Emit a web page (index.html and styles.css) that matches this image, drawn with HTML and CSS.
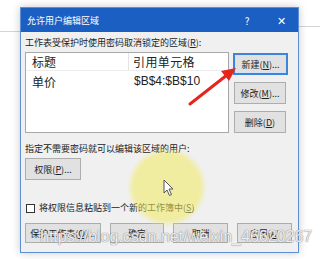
FILE: index.html
```html
<!DOCTYPE html>
<html lang="zh-CN">
<head>
    <meta charset="UTF-8">
    <title>允许用户编辑区域</title>
    <link rel="stylesheet" href="styles.css">
</head>
<body>
    <div class="dialog">
        <div class="titlebar">
            <span class="title">允许用户编辑区域</span>
            <span class="title-btn help">?</span>
            <span class="title-btn close">✕</span>
        </div>

        <div class="content">
            <p class="label">工作表受保护时使用密码取消锁定的区域(<u>R</u>):</p>

            <div class="main-row">
                <div class="list">
                    <div class="list-head">
                        <span class="col-title">标题</span>
                        <span class="col-ref">引用单元格</span>
                    </div>
                    <div class="list-row">
                        <span class="col-title">单价</span>
                        <span class="col-ref">$B$4:$B$10</span>
                    </div>
                </div>

                <div class="side-btns">
                    <button class="btn focused">新建(<u>N</u>)...</button>
                    <button class="btn">修改(<u>M</u>)...</button>
                    <button class="btn">删除(<u>D</u>)</button>
                </div>
            </div>

            <p class="label second">指定不需要密码就可以编辑该区域的用户:</p>
            <button class="btn perm">权限(<u>P</u>)...</button>

            <label class="check-row">
                <span class="checkbox"></span>
                <span>将权限信息粘贴到一个新的工作簿中(<u>S</u>)</span>
            </label>

            <div class="bottom-btns">
                <button class="btn wide">保护工作表(<u>O</u>)...</button>
                <button class="btn">确定</button>
                <button class="btn">取消</button>
                <button class="btn">应用(<u>A</u>)</button>
            </div>
        </div>
    </div>

    <!-- screen recording overlays -->
    <div class="highlight"></div>

    <svg class="arrow" width="320" height="259" viewBox="0 0 320 259">
        <line x1="190" y1="104" x2="227" y2="75" stroke="#e5261d" stroke-width="3" stroke-linecap="round"/>
        <polygon points="236,68 229,81 221,71" fill="#e5261d"/>
    </svg>

    <svg class="cursor" width="12" height="18" viewBox="0 0 12 18">
        <path d="M1 1 L1 14 L4 11 L6.5 16.5 L8.5 15.5 L6 10 L10 10 Z" fill="#fff" stroke="#555" stroke-width="1"/>
    </svg>

    <div class="watermark">https://blog.csdn.net/weixin_46620267</div>
</body>
</html>
```

FILE: styles.css
```css
body {
    margin: 0;
    width: 320px;
    height: 259px;
    overflow: hidden;
    position: relative;
    background:
        linear-gradient(#d4d4d4, #d4d4d4) 0 31px / 20px 1px no-repeat,
        linear-gradient(#d4d4d4, #d4d4d4) 299px 26px / 21px 1px no-repeat,
        #fff;
    font-family: "Noto Sans CJK SC", "Noto Sans", sans-serif;
    color: #222;
}

.dialog {
    margin: 7px 0 0 20px;
    width: 277px;
    background: #f0f0f0;
    border: 1px solid #5d8fd2;
    box-shadow: 0 0 8px rgba(0, 0, 0, 0.22);
}

.titlebar {
    height: 24px;
    background: #1c5fc2;
    color: #fff;
    display: flex;
    align-items: center;
    font-size: 9px;
    padding-left: 6px;
}

.title {
    flex: 1;
}

.title-btn {
    width: 34px;
    text-align: center;
    font-size: 10px;
}

.close {
    font-size: 11px;
}

.content {
    padding: 5px 6px 9px 4px;
}

.label {
    margin: 0 0 3px;
    font-size: 9px;
    line-height: 12px;
    white-space: nowrap;
}

.label.second {
    margin-top: 10px;
}

.main-row {
    display: flex;
    justify-content: space-between;
}

.list {
    width: 202px;
    height: 79px;
    background: #fff;
    border: 1px solid #a8a8a8;
    font-size: 12px;
}

.list-head, .list-row {
    display: flex;
    align-items: center;
}

.list-head {
    height: 17px;
    border-bottom: 1px solid #ececec;
}

.list-row {
    height: 20px;
}

.col-title {
    width: 96px;
    padding-left: 6px;
    border-right: 1px solid transparent;
}

.list-head .col-title {
    border-right-color: #e3e3e3;
}

.col-ref {
    padding-left: 4px;
    letter-spacing: 0.4px;
}

.list-row .col-ref {
    font-family: "Liberation Sans", Arial, sans-serif;
    letter-spacing: 0;
    padding-left: 5px;
}

.side-btns {
    display: flex;
    flex-direction: column;
    gap: 7px;
    padding-top: 1px;
    margin-right: 4px;
}

.btn {
    font-family: "Noto Sans CJK SC", "Noto Sans", sans-serif;
    font-size: 9px;
    color: #222;
    background: #e1e1e1;
    border: 1px solid #adadad;
    height: 22px;
    width: 52px;
    padding: 0;
    white-space: nowrap;
}

.btn.focused {
    border: 2px solid #3d85d8;
    box-shadow: inset 0 0 0 1px #cfe2f7;
    width: 55px;
    margin-left: -1px;
}

.perm {
    display: block;
    width: 56px;
}

.check-row {
    display: flex;
    align-items: center;
    gap: 4px;
    margin-top: 22px;
    font-size: 9px;
    line-height: 12px;
    padding-left: 1px;
}

.checkbox {
    width: 7px;
    height: 7px;
    border: 1px solid #333;
    background: #fff;
}

.bottom-btns {
    display: flex;
    gap: 9px;
    margin-top: 9px;
}

.bottom-btns .btn {
    height: 20px;
    width: 55px;
}

.bottom-btns .btn.wide {
    width: 76px;
}

.highlight {
    position: absolute;
    left: 127px;
    top: 147px;
    width: 80px;
    height: 80px;
    border-radius: 50%;
    background: radial-gradient(circle, rgba(240, 234, 95, 0.55) 58%, rgba(240, 234, 95, 0) 71%);
}

.arrow {
    position: absolute;
    left: 0;
    top: 0;
}

.cursor {
    position: absolute;
    left: 163px;
    top: 179px;
}

.watermark {
    position: absolute;
    left: 40px;
    top: 228px;
    font-family: "Liberation Sans", Arial, sans-serif;
    font-size: 16px;
    color: rgba(255, 255, 255, 0.85);
    text-shadow: 0 0 1px #8a8a8a, 0 0 1px #8a8a8a;
    white-space: nowrap;
}
```
